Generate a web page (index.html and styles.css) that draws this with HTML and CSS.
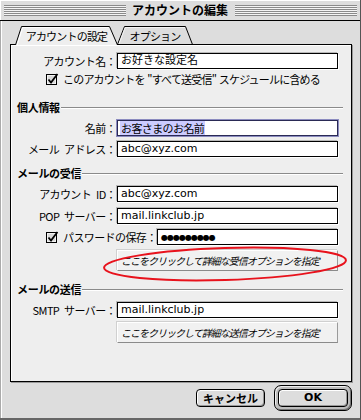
FILE: index.html
```html
<!DOCTYPE html>
<html lang="ja">
<head>
<meta charset="utf-8">
<title>アカウントの編集</title>
<link rel="stylesheet" href="styles.css">
</head>
<body>
<div class="window">
  <div class="titlebar">
    <div class="stripes"></div>
    <div class="title">アカウントの編集</div>
    <div class="stripes"></div>
  </div>
  <div class="body">
    <div class="tabs">
      <div class="tab tab-active">
        <svg class="tab-shape" width="103" height="19" viewBox="0 0 103 19">
          <path d="M0.5 19 L6.5 0.5 L94.5 0.5 L102.5 19 Z" fill="#eeeeee" stroke="none"/>
          <path d="M0.5 19 L6.5 0.5 L94.5 0.5 L102.5 19" fill="none" stroke="#000"/>
          <path d="M2.2 19 L7.7 1.5 L93.5 1.5" fill="none" stroke="#fff"/>
        </svg>
        <span class="tab-label">アカウントの設定</span>
      </div>
      <div class="tab tab-inactive">
        <svg class="tab-shape" width="76" height="19" viewBox="0 0 76 19">
          <path d="M0.5 18.5 L7.5 0.5 L68.5 0.5 L75.5 18.5 Z" fill="#dddddd" stroke="#000"/>
          <path d="M2 18 L8.2 1.5 L68 1.5" fill="none" stroke="#f4f4f4"/>
          <path d="M0 18.5 H76" stroke="#000"/>
        </svg>
        <span class="tab-label">オプション</span>
      </div>
    </div>

    <div class="panel">
      <div class="row mt-first">
        <span class="lbl">アカウント名：</span>
        <div class="field">お好きな設定名</div>
      </div>
      <div class="cbrow mt3">
        <svg class="cb" width="13" height="13" viewBox="0 0 13 13">
          <rect x="0.5" y="1.5" width="10" height="10" fill="#d8d8d8" stroke="#000"/>
          <rect x="1.5" y="2.5" width="8" height="8" fill="none" stroke="#f2f2f2"/>
          <path d="M2.5 6.5 L5 9.5 L11.5 1" fill="none" stroke="#000" stroke-width="1.8"/>
        </svg>
        <span class="cbtext">このアカウントを "すべて送受信" スケジュールに含める</span>
      </div>

      <div class="hdr mt14">個人情報</div>
      <div class="row mt6">
        <span class="lbl">名前：</span>
        <div class="field focus"><span class="sel">お客さまのお名前</span></div>
      </div>
      <div class="row mt5">
        <span class="lbl">メール アドレス：</span>
        <div class="field">abc@xyz.com</div>
      </div>

      <div class="hdr mt9">メールの受信</div>
      <div class="row mt6">
        <span class="lbl">アカウント ID：</span>
        <div class="field">abc@xyz.com</div>
      </div>
      <div class="row mt6">
        <span class="lbl">POP サーバー：</span>
        <div class="field">mail.linkclub.jp</div>
      </div>
      <div class="row mt5">
        <svg class="cb" width="13" height="13" viewBox="0 0 13 13">
          <rect x="0.5" y="1.5" width="10" height="10" fill="#d8d8d8" stroke="#000"/>
          <rect x="1.5" y="2.5" width="8" height="8" fill="none" stroke="#f2f2f2"/>
          <path d="M2.5 6.5 L5 9.5 L11.5 1" fill="none" stroke="#000" stroke-width="1.8"/>
        </svg>
        <span class="cbtext pwlabel">パスワードの保存：</span>
        <div class="field pw"><span class="dots">●●●●●●●●●</span></div>
      </div>
      <div class="optbtn mt5">ここをクリックして詳細な受信オプションを指定</div>

      <div class="hdr mt11">メールの送信</div>
      <div class="row mt6">
        <span class="lbl">SMTP サーバー：</span>
        <div class="field">mail.linkclub.jp</div>
      </div>
      <div class="optbtn mt4">ここをクリックして詳細な送信オプションを指定</div>

      <svg class="mark" width="260" height="44" viewBox="0 0 260 44">
        <ellipse cx="130" cy="22" rx="121" ry="16" fill="none" stroke="#e8121c" stroke-width="2" transform="rotate(-1.8 130 22)"/>
      </svg>
    </div>

    <div class="footer">
      <div class="btn">キャンセル</div>
      <div class="okring"><div class="btn ok">OK</div></div>
    </div>
  </div>
</div>
</body>
</html>
```

FILE: styles.css
```css
html, body {
  margin: 0;
  padding: 0;
  background: #dddddd;
}

.window {
  width: 361px;
  height: 420px;
  box-sizing: border-box;
  background: #dddddd;
  border-right: 1px solid #555;
  border-bottom: 2px solid #666;
  box-shadow: inset 1px 0 0 #aaa, inset 2px 0 0 #fff;
  font-family: "Noto Sans CJK JP", sans-serif;
  font-size: 11px;
  color: #000;
  overflow: hidden;
}

.titlebar {
  height: 20px;
  border-bottom: 1px solid #000;
  display: flex;
  align-items: center;
  padding: 0 3px 0 4px;
  background: #dddddd;
  box-shadow: inset 1px 1px 0 #fff;
}

.stripes {
  flex: 1;
  height: 11px;
  margin-top: 1px;
  background: repeating-linear-gradient(to bottom, #8a8a8a 0 1px, #f4f4f4 1px 2px);
}

.title {
  font-weight: bold;
  font-size: 12px;
  line-height: 20px;
  padding: 0 7px 0 6px;
}

.body {
  padding: 5px 0 0 10px;
}

.tabs {
  display: flex;
  height: 19px;
  margin-left: 5px;
  margin-bottom: -1px;
  position: relative;
  z-index: 2;
}

.tab {
  position: relative;
  display: flex;
  align-items: center;
  justify-content: center;
  height: 19px;
}

.tab-active { width: 103px; }
.tab-inactive { width: 76px; margin-left: -1px; }

.tab-shape {
  position: absolute;
  left: 0;
  top: 0;
}

.tab-label {
  position: relative;
  letter-spacing: -0.8px;
  line-height: 14px;
  margin-top: 1px;
}

.panel {
  position: relative;
  width: 342px;
  height: 338px;
  box-sizing: border-box;
  border: 1px solid #000;
  background: #eeeeee;
  box-shadow: 1px 1px 0 #999, inset 1px 1px 0 #fff;
  padding: 8px 8px 0 6px;
}

.row {
  display: flex;
  align-items: center;
  width: 321px;
  height: 16px;
}

.lbl {
  width: 100px;
  flex: none;
  text-align: right;
  letter-spacing: -0.6px;
  word-spacing: 3px;
  line-height: 16px;
  white-space: nowrap;
  padding-right: 1px;
  box-sizing: border-box;
}

.field {
  width: 221px;
  height: 16px;
  box-sizing: border-box;
  border: 1px solid #000;
  background: #fff;
  box-shadow: -1px -1px 0 #b8b8b8, 1px 1px 0 #fff;
  font-family: "DejaVu Sans", "Noto Sans CJK JP", sans-serif;
  font-size: 11px;
  line-height: 14px;
  padding-left: 3px;
  white-space: nowrap;
  overflow: hidden;
}

.field.focus {
  border-color: #2a2a55;
  box-shadow: 0 0 0 1px #8c8cc0;
  padding-left: 2px;
}

.sel {
  background: #ccccff;
  font-family: "Noto Sans CJK JP", sans-serif;
  letter-spacing: -0.6px;
  padding: 0 1px;
}

.field.pw {
  width: 181px;
  margin-left: auto;
}

.dots {
  font-family: "DejaVu Sans", sans-serif;
  font-size: 8px;
  letter-spacing: -1px;
  line-height: 14px;
  font-weight: bold;
}

.cbrow {
  display: flex;
  align-items: center;
  height: 14px;
}

.cb {
  flex: none;
  margin-left: 29px;
}

.cbtext {
  margin-left: 4px;
  letter-spacing: -0.8px;
  word-spacing: 1px;
  line-height: 14px;
  white-space: nowrap;
}

.pwlabel {
  letter-spacing: -0.6px;
}

.hdr {
  display: flex;
  align-items: center;
  height: 14px;
  width: 326px;
  font-weight: bold;
  line-height: 14px;
  letter-spacing: -0.3px;
}

.hdr::after {
  content: "";
  flex: 1;
  margin-left: 1px;
  margin-top: 1px;
  border-top: 1px solid #8a8a8a;
  border-bottom: 1px solid #fff;
}

.optbtn {
  margin-left: 100px;
  width: 221px;
  height: 21px;
  box-sizing: border-box;
  background: #f1f1f1;
  border: 1px solid;
  border-color: #fff #9a9a9a #8a8a8a #fff;
  box-shadow: -1px -1px 0 #d0d0d0;
  font-style: italic;
  font-size: 10px;
  letter-spacing: -1px;
  line-height: 19px;
  padding-left: 3px;
  white-space: nowrap;
}

.mark {
  position: absolute;
  left: 84px;
  top: 197px;
  pointer-events: none;
}

.mt-first { margin-top: 0; }
.mt3 { margin-top: 3px; }
.mt4 { margin-top: 4px; }
.mt5 { margin-top: 5px; }
.mt6 { margin-top: 6px; }
.mt9 { margin-top: 9px; }
.mt11 { margin-top: 11px; }
.mt14 { margin-top: 14px; }

.footer {
  display: flex;
  justify-content: flex-end;
  align-items: center;
  gap: 9px;
  margin-top: 3px;
  padding-right: 8px;
}

.btn {
  height: 18px;
  box-sizing: border-box;
  border: 1px solid #000;
  border-radius: 4px;
  background: #dddddd;
  box-shadow: inset 1px 1px 0 #fff, inset -1px -1px 0 #999;
  font-weight: bold;
  font-size: 11px;
  line-height: 16px;
  text-align: center;
  width: 69px;
}

.okring {
  border: 1px solid #000;
  border-radius: 7px;
  padding: 3px;
  background: #bdbdbd;
  box-shadow: inset 1px 1px 0 #eee, inset -1px -1px 0 #777;
}

.btn.ok {
  width: 70px;
  height: 18px;
  font-family: "DejaVu Sans", sans-serif;
  font-size: 11px;
}
```
